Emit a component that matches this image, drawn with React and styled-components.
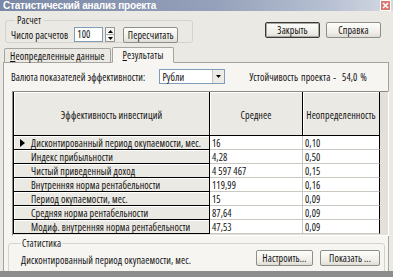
import React from 'react';
import styled, { createGlobalStyle } from 'styled-components';

const Global = createGlobalStyle`
  html, body { margin: 0; padding: 0; background: #6f6f6f; }
  body {
    font-family: "Open Sans", "Liberation Sans", Arial, sans-serif;
    font-stretch: condensed;
    font-size: 10px;
    letter-spacing: 0.1px;
    color: #111;
  }
  * { box-sizing: border-box; }
`;

const Window = styled.div`
  width: 393px;
  height: 277px;
  background: #ebe9e3;
  display: flex;
  flex-direction: column;
  overflow: hidden;
  border-bottom: 6px solid #8d8d8d;
`;

const TitleBar = styled.div`
  height: 15px;
  display: flex;
  align-items: center;
  justify-content: space-between;
  padding: 0 2px 0 3px;
  background: linear-gradient(90deg, #7b88a5 0%, #95a1ba 55%, #b9c2d4 85%, #d4d9e3 100%);
  color: #fff;
  font-family: "Liberation Sans", Arial, sans-serif;
  font-stretch: normal;
  font-weight: bold;
  font-size: 10px;
  letter-spacing: -0.2px;
`;

const CloseBox = styled.div`
  width: 11px;
  height: 11px;
  border: 1px solid #fff;
  background: #d7776f;
  display: flex;
  align-items: center;
  justify-content: center;
`;

const Body = styled.div`
  flex: 1;
  display: flex;
  flex-direction: column;
  padding: 2px 4px 0 3px;
`;

const TopRow = styled.div`
  display: flex;
  align-items: flex-start;
  height: 32px;
`;

const CalcGroup = styled.fieldset`
  margin: 0 0 0 2px;
  padding: 0 8px 0 5px;
  width: 188px;
  height: 30px;
  border: 1px solid #d6d3ca;
  border-radius: 3px;
  display: flex;
  align-items: center;

  legend {
    padding: 0 2px;
    margin-left: 4px;
  }
`;

const Label = styled.span`
  white-space: nowrap;
  margin-right: ${p => p.$mr || 0}px;
`;

const Spin = styled.div`
  display: flex;
  align-items: center;
  height: 15px;
`;

const NumInput = styled.div`
  width: 29px;
  height: 15px;
  background: #fff;
  border: 1px solid #7f9db9;
  padding: 0 2px;
  line-height: 13px;
`;

const SpinBtns = styled.div`
  width: 10px;
  height: 15px;
  margin-left: 2px;
  display: flex;
  flex-direction: column;
  border: 1px solid #9a9a9a;
  background: #f4f3ef;
`;

const SpinBtn = styled.div`
  flex: 1;
  display: flex;
  align-items: center;
  justify-content: center;
  & + & { border-top: 1px solid #b0b0b0; }
`;

const Button = styled.div`
  width: ${p => p.$w || 55}px;
  height: 16px;
  margin-left: ${p => p.$ml || 0}px;
  display: flex;
  align-items: center;
  justify-content: center;
  border: 1px solid ${p => (p.$default ? '#3a3a3a' : '#8f8f8a')};
  border-radius: 2px;
  background: linear-gradient(#fdfdfb, #eeede7 70%, #dedcd3);
  box-shadow: ${p => (p.$default ? 'inset 0 0 0 1px #a9a9a2' : 'none')};
  white-space: nowrap;
`;

const TopButtons = styled.div`
  margin-left: auto;
  margin-right: 8px;
  margin-top: 9px;
  display: flex;
  gap: 6px;
`;

const Tabs = styled.div`
  display: flex;
  align-items: flex-end;
  height: 16px;
  margin-top: 1px;
  padding-left: 1px;
`;

const Tab = styled.div`
  height: ${p => (p.$active ? 16 : 14)}px;
  padding: 0 ${p => (p.$active ? 10 : 5)}px;
  display: flex;
  align-items: center;
  border: 1px solid #a6a49c;
  border-bottom: ${p => (p.$active ? '1px solid #f6f5f1' : 'none')};
  border-radius: 2px 2px 0 0;
  background: ${p => (p.$active ? '#f6f5f1' : '#ebe9e3')};
  margin-bottom: ${p => (p.$active ? -1 : 0)}px;
  margin-left: ${p => (p.$active ? 1 : 0)}px;
  position: relative;
  z-index: ${p => (p.$active ? 2 : 1)};
  u { text-decoration: underline; }
`;

const Panel = styled.div`
  flex: 1;
  border: 1px solid #a6a49c;
  background: #f6f5f1;
  margin-bottom: 3px;
  display: flex;
  flex-direction: column;
  padding: 6px 0 0 4px;
`;

const CurrencyRow = styled.div`
  display: flex;
  align-items: center;
  height: 15px;
  padding-left: 3px;
`;

const Combo = styled.div`
  width: 66px;
  height: 15px;
  margin-left: 14px;
  background: #fff;
  border: 1px solid #7f9db9;
  display: flex;
  align-items: center;
  justify-content: space-between;
  padding-left: 2px;
`;

const ComboArrow = styled.div`
  width: 12px;
  height: 13px;
  background: #ecebe6;
  border-left: 1px solid #c6c4bc;
  display: flex;
  align-items: center;
  justify-content: center;
`;

const Stability = styled.span`
  margin-left: 24px;
  white-space: nowrap;
  word-spacing: 1px;
`;

const GridBox = styled.div`
  margin: 7px 0 0 4px;
  width: 377px;
  height: 145px;
  border: 1px solid #8e8c84;
  border-right-color: #fff;
  border-bottom-color: #fff;
  background: #e2e0d9;
  overflow: hidden;
`;

const Grid = styled.div`
  display: grid;
  grid-template-columns: 196px 93px 77px;
  grid-template-rows: 44px repeat(7, 14px);
  border-left: 1px solid #000;
`;

const HeadCell = styled.div`
  display: flex;
  align-items: center;
  justify-content: center;
  background: #ebe9e3;
  border-right: 1px solid #000;
  border-bottom: 1px solid #000;
  box-shadow: inset 1px 1px 0 #fff;
  padding-top: 3px;
  white-space: nowrap;
`;

const RowHead = styled.div`
  display: flex;
  align-items: center;
  background: #ebe9e3;
  border-right: 1px solid #000;
  border-bottom: 1px solid #000;
  box-shadow: inset 1px 1px 0 #fff;
  padding-left: 6px;
  white-space: nowrap;
  overflow: hidden;
`;

const Pointer = styled.span`
  width: 11px;
  display: inline-flex;
  align-items: center;
  flex: none;
`;

const DataCell = styled.div`
  display: flex;
  align-items: center;
  background: #fff;
  border-right: 1px solid ${p => (p.$last ? '#000' : '#c9c7c0')};
  border-bottom: 1px solid #c9c7c0;
  padding-left: 2px;
  white-space: nowrap;
`;

const StatGroup = styled.fieldset`
  margin: 0 3px 0 0;
  padding: 0 4px 5px 12px;
  border: 1px solid #d6d3ca;
  border-radius: 3px;
  display: flex;
  align-items: flex-end;

  legend {
    padding: 0 1px;
    margin-left: 0;
    color: #1a1a1a;
  }
`;

const StatText = styled.span`
  white-space: nowrap;
  padding-bottom: 1px;
`;

const StatButtons = styled.div`
  margin-left: auto;
  margin-bottom: 2px;
  display: flex;
  gap: 7px;
`;

const rows = [
  ['Дисконтированный период окупаемости, мес.', '16', '0,10'],
  ['Индекс прибыльности', '4,28', '0,50'],
  ['Чистый приведенный доход', '4 597 467', '0,15'],
  ['Внутренняя норма рентабельности', '119,99', '0,16'],
  ['Период окупаемости, мес.', '15', '0,09'],
  ['Средняя норма рентабельности', '87,64', '0,09'],
  ['Модиф. внутренняя норма рентабельности', '47,53', '0,09'],
];

export default function App() {
  return (
    <>
      <Global />
      <Window>
        <TitleBar>
          <span>Статистический анализ проекта</span>
          <CloseBox>
            <svg width="7" height="7" viewBox="0 0 7 7">
              <path d="M1 1L6 6M6 1L1 6" stroke="#fff" strokeWidth="1.6" />
            </svg>
          </CloseBox>
        </TitleBar>
        <Body>
          <TopRow>
            <CalcGroup>
              <legend>Расчет</legend>
              <Label $mr={6}>Число расчетов</Label>
              <Spin>
                <NumInput>100</NumInput>
                <SpinBtns>
                  <SpinBtn>
                    <svg width="5" height="3" viewBox="0 0 5 3"><path d="M0 3L2.5 0L5 3Z" fill="#000" /></svg>
                  </SpinBtn>
                  <SpinBtn>
                    <svg width="5" height="3" viewBox="0 0 5 3"><path d="M0 0L2.5 3L5 0Z" fill="#000" /></svg>
                  </SpinBtn>
                </SpinBtns>
              </Spin>
              <Button $w={55} $ml={8}>Пересчитать</Button>
            </CalcGroup>
            <TopButtons>
              <Button $default>Закрыть</Button>
              <Button>Справка</Button>
            </TopButtons>
          </TopRow>
          <Tabs>
            <Tab><span><u>Н</u>еопределенные данные</span></Tab>
            <Tab $active><span><u>Р</u>езультаты</span></Tab>
          </Tabs>
          <Panel>
            <CurrencyRow>
              <Label>Валюта показателей эффективности:</Label>
              <Combo>
                <span>Рубли</span>
                <ComboArrow>
                  <svg width="5" height="3" viewBox="0 0 5 3"><path d="M0 0L2.5 3L5 0Z" fill="#000" /></svg>
                </ComboArrow>
              </Combo>
              <Stability>Устойчивость проекта - &nbsp;54,0 %</Stability>
            </CurrencyRow>
            <GridBox>
              <Grid>
                <HeadCell>Эффективность инвестиций</HeadCell>
                <HeadCell>Среднее</HeadCell>
                <HeadCell>Неопределенность</HeadCell>
                {rows.map((r, i) => (
                  <React.Fragment key={r[0]}>
                    <RowHead>
                      <Pointer>
                        {i === 0 && (
                          <svg width="5" height="8" viewBox="0 0 5 8"><path d="M0 0L5 4L0 8Z" fill="#000" /></svg>
                        )}
                      </Pointer>
                      {r[0]}
                    </RowHead>
                    <DataCell>{r[1]}</DataCell>
                    <DataCell $last>{r[2]}</DataCell>
                  </React.Fragment>
                ))}
              </Grid>
            </GridBox>
            <StatGroup>
              <legend>Статистика</legend>
              <StatText>Дисконтированный период окупаемости, мес.</StatText>
              <StatButtons>
                <Button $w={57}>Настроить...</Button>
                <Button $w={60}>Показать ...</Button>
              </StatButtons>
            </StatGroup>
          </Panel>
        </Body>
      </Window>
    </>
  );
}
